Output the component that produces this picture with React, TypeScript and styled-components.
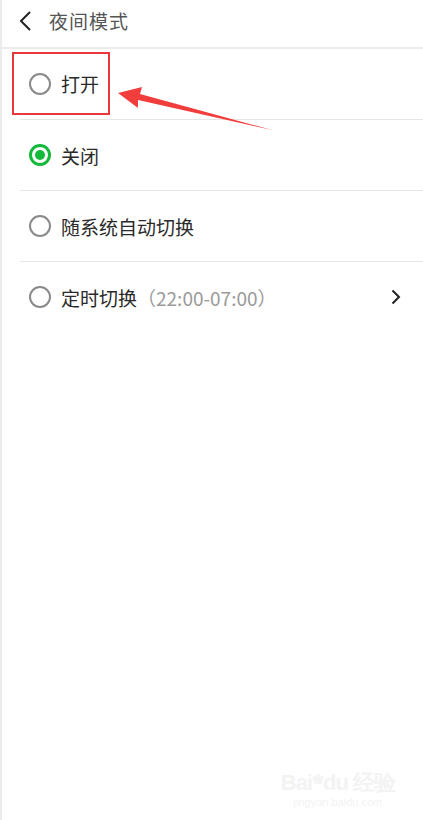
import styled, { createGlobalStyle } from "styled-components";

const GlobalStyle = createGlobalStyle`
    html, body {
        margin: 0;
        padding: 0;
        background: #ffffff;
    }
    body {
        font-family: "Noto Sans CJK SC", "Noto Sans", Roboto, sans-serif;
    }
`;

type Option = {
    label: string;
    hint?: string;
    checked?: boolean;
    more?: boolean;
    highlighted?: boolean;
};

const options: Option[] = [
    { label: "打开", highlighted: true },
    { label: "关闭", checked: true },
    { label: "随系统自动切换" },
    { label: "定时切换", hint: "（22:00-07:00）", more: true },
];

const App = () => {
    return (
        <>
            <GlobalStyle />
            <Screen>
                <Header>
                    <BackIcon />
                    <Title>夜间模式</Title>
                </Header>
                <List>
                    {options.map((o) => (
                        <Row key={o.label}>
                            <Choice $highlighted={o.highlighted}>
                                <Radio $checked={o.checked} />
                                <Label>
                                    {o.label}
                                    {o.hint && <Hint>{o.hint}</Hint>}
                                </Label>
                            </Choice>
                            {o.more && <ChevronIcon />}
                        </Row>
                    ))}
                </List>
                <Pointer />
                <Watermark>
                    <WatermarkLogo>
                        Bai<Paw>❀</Paw>du 经验
                    </WatermarkLogo>
                    <WatermarkUrl>jingyan.baidu.com</WatermarkUrl>
                </Watermark>
            </Screen>
        </>
    );
};

const Screen = styled.div`
    position: relative;
    width: 423px;
    height: 820px;
    box-sizing: border-box;
    border-left: 2px solid #ececec;
    background: #fff;
    overflow: hidden;
`;

const Header = styled.div`
    height: 49px;
    box-sizing: border-box;
    padding: 0 0 6px 16px;
    display: flex;
    align-items: center;
    gap: 17px;
    border-bottom: 2px solid #ebebeb;
`;

const Title = styled.div`
    font-size: 19px;
    line-height: 1;
    color: #555;
    letter-spacing: 1px;
`;

const List = styled.div`
    display: flex;
    flex-direction: column;
`;

const Row = styled.div`
    height: 70px;
    margin-left: 18px;
    padding-right: 22px;
    display: flex;
    align-items: center;
    justify-content: space-between;
    border-bottom: 1px solid #e6e6e6;

    &:last-child {
        border-bottom: none;
    }
`;

const Choice = styled.div<{ $highlighted?: boolean }>`
    display: flex;
    align-items: center;
    gap: 10px;
    box-sizing: border-box;
    height: 63px;
    margin-left: -8px;
    padding: 0 9px 0 15px;
    border: 2px solid ${(p) => (p.$highlighted ? "#e8383b" : "transparent")};
    margin-top: ${(p) => (p.$highlighted ? "-1px" : "0")};
`;

const Radio = styled.span<{ $checked?: boolean }>`
    width: 22px;
    height: 22px;
    box-sizing: border-box;
    border-radius: 50%;
    border: ${(p) => (p.$checked ? "3px solid #14b93a" : "2px solid #8a8a8a")};
    display: flex;
    align-items: center;
    justify-content: center;

    &::after {
        content: "";
        display: ${(p) => (p.$checked ? "block" : "none")};
        width: 10px;
        height: 10px;
        border-radius: 50%;
        background: #14b93a;
    }
`;

const Label = styled.span`
    font-size: 19px;
    line-height: 1;
    color: #2a2a2a;
`;

const Hint = styled.span`
    color: #9a9a9a;
`;

const Watermark = styled.div`
    position: absolute;
    right: 28px;
    bottom: 12px;
    display: flex;
    flex-direction: column;
    align-items: center;
    color: #f3f3f3;
    font-family: "Liberation Sans", sans-serif;
    line-height: 1;
`;

const WatermarkLogo = styled.div`
    font-size: 22px;
    font-weight: 700;
    letter-spacing: -1px;
`;

const Paw = styled.span`
    font-size: 14px;
    vertical-align: top;
`;

const WatermarkUrl = styled.div`
    margin-top: 3px;
    font-size: 11px;
`;

const BackIcon = () => (
    <svg width="14" height="22" viewBox="0 0 14 22">
        <path d="M12 2 L3 11 L12 20" fill="none" stroke="#222" strokeWidth="2" />
    </svg>
);

const ChevronIcon = () => (
    <svg width="10" height="16" viewBox="0 0 10 16">
        <path d="M1.5 1.5 L8 8 L1.5 14.5" fill="none" stroke="#222" strokeWidth="2" />
    </svg>
);

const Pointer = () => (
    <PointerSvg width="423" height="820" viewBox="0 0 423 820">
        <path d="M118 93 L142 87 L140 94 L272 130 L138 100 L138 108 Z" fill="#f23d3d" />
    </PointerSvg>
);

const PointerSvg = styled.svg`
    position: absolute;
    left: -2px;
    top: 0;
    pointer-events: none;
`;

export default App;
